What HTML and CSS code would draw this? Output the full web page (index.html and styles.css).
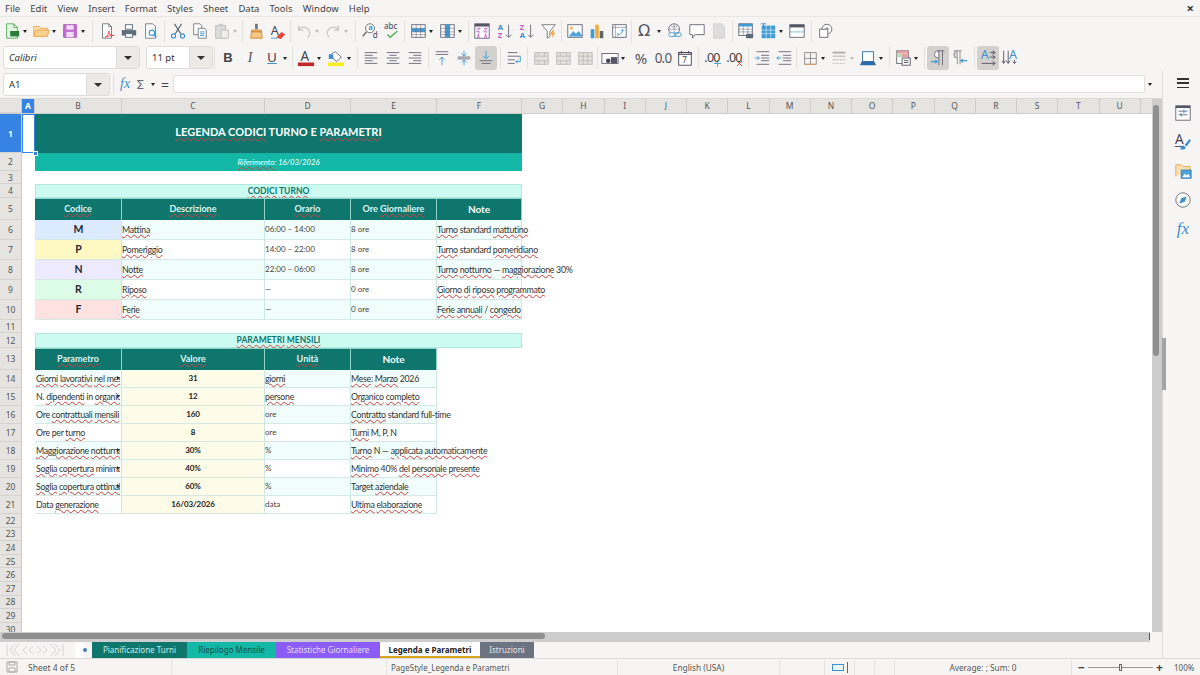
FILE: index.html
```html
<!DOCTYPE html>
<html lang="it">
<head>
<meta charset="utf-8">
<title>Legenda e Parametri</title>
<link rel="stylesheet" href="styles.css">
</head>
<body>
<div class="app">
  <nav class="menubar">
    <span>File</span><span>Edit</span><span>View</span><span>Insert</span><span>Format</span><span>Styles</span><span>Sheet</span><span>Data</span><span>Tools</span><span>Window</span><span>Help</span>
    <b class="close">×</b>
  </nav>

  <div class="tb tb1">
    <i class="ic"><svg viewBox="0 0 20 20"><path d="M4 2h8l4 4v12H4z" fill="#e4f3e2" stroke="#52ae57"/><path d="M12 2v4h4" fill="none" stroke="#52ae57"/><rect x="8" y="10" width="10" height="6" fill="#2f7d3a"/></svg></i><i class="ar"></i>
    <i class="ic"><svg viewBox="0 0 20 20"><path d="M2 16V5h6l2 2h7v2" fill="#fbe0b4" stroke="#eaa54b"/><path d="M2 16l2-7h15l-2 7z" fill="#fbd08a" stroke="#eaa54b"/></svg></i><i class="ar"></i>
    <i class="ic"><svg viewBox="0 0 20 20"><path d="M3 3h14v14H3z" fill="#c56fd1" stroke="#a94db8"/><rect x="6" y="3.500" width="8" height="5" fill="#f3dcf6"/><rect x="6" y="11" width="8" height="6" fill="#f3dcf6"/></svg></i><i class="ar"></i>
    <i class="sep z8"></i>
    <i class="ic"><svg viewBox="0 0 20 20"><path d="M5 2h7l3 3v13H5z" fill="#fff" stroke="#777"/><path d="M12 2v3h3" fill="none" stroke="#777"/><path d="M8 17c3-1 4-5 4-7 0 3 2 5 6 5-3 0-6 0-10 2z" fill="none" stroke="#e0433b"/></svg></i>
    <i class="ic"><svg viewBox="0 0 20 20"><rect x="6" y="3" width="8" height="5" fill="#fff" stroke="#5b6b78"/><path d="M2 9h16v6H2z" fill="#5b6b78"/><rect x="6" y="13" width="8" height="4" fill="#fff" stroke="#5b6b78"/></svg></i>
    <i class="ic"><svg viewBox="0 0 20 20"><path d="M4 2h8l3 3v13H4z" fill="#fff" stroke="#777"/><circle cx="11" cy="12" r="3" fill="none" stroke="#3d9bd6" stroke-width="1.300"/><path d="M13 14l3 3" stroke="#3d9bd6" stroke-width="1.500"/></svg></i>
    <i class="sep z5"></i>
    <i class="ic"><svg viewBox="0 0 20 20"><path d="M6 2l7 11M14 2L7 13" stroke="#4a5560" stroke-width="1.200"/><circle cx="5" cy="15.500" r="2.300" fill="none" stroke="#3d8fd0" stroke-width="1.200"/><circle cx="15" cy="15.500" r="2.300" fill="none" stroke="#3d8fd0" stroke-width="1.200"/></svg></i>
    <i class="ic"><svg viewBox="0 0 20 20"><path d="M3 2h7l2 2v10H3z" fill="#fff" stroke="#777"/><path d="M8 7h7l2 2v9H8z" fill="#fff" stroke="#777"/><path d="M10 11h5M10 13h5M10 15h5" stroke="#3d9bd6"/></svg></i>
    <i class="ic"><svg viewBox="0 0 20 20"><rect x="3" y="4" width="11" height="14" fill="#ddd" stroke="#bbb"/><rect x="6" y="2" width="5" height="3" fill="#ccc"/><rect x="9" y="9" width="8" height="9" fill="#eee" stroke="#bbb"/></svg></i><i class="ar off"></i>
    <i class="sep z5"></i>
    <i class="ic"><svg viewBox="0 0 20 20"><rect x="9" y="2" width="3" height="6" fill="#6b7680"/><path d="M5 9h11v2H5z" fill="#f3b665" stroke="#d08a30"/><path d="M5 11h11l1 7H4z" fill="#f7c884" stroke="#d08a30"/></svg></i>
    <i class="ic"><svg viewBox="0 0 20 20"><text x="2" y="14" class="ict">A</text><path d="M8 17l6-6 4 3-5 5z" fill="#e8443a"/><path d="M2 18h8" stroke="#3d9bd6"/></svg></i>
    <i class="sep z4"></i>
    <i class="ic"><svg viewBox="0 0 20 20"><path d="M4 4v5h5M4 9c2-4 9-5 12 1 1 2 0 5-2 7" fill="none" stroke="#c9c7c4" stroke-width="1.300"/></svg></i><i class="ar off"></i>
    <i class="ic"><svg viewBox="0 0 20 20"><path d="M16 4v5h-5M16 9c-2-4-9-5-12 1-1 2 0 5 2 7" fill="none" stroke="#c9c7c4" stroke-width="1.300"/></svg></i><i class="ar off"></i>
    <i class="sep z8"></i>
    <i class="ic"><svg viewBox="0 0 20 20"><circle cx="10" cy="7" r="5" fill="#fff" stroke="#666"/><path d="M6 11l-4 5" stroke="#666" stroke-width="1.600"/><text x="8" y="9" class="ict xs blue">a</text><text x="13" y="18" class="ict sm">d</text></svg></i>
    <i class="ic"><svg viewBox="0 0 20 20"><text x="1" y="8" class="ict sm">abc</text><path d="M5 14l3 3 8-7" fill="none" stroke="#4caf50" stroke-width="1.500"/></svg></i>
    <i class="sep z4"></i>
    <i class="ic"><svg viewBox="0 0 20 20"><rect x="3" y="3" width="15" height="14" fill="#fff" stroke="#667"/><rect x="3" y="7" width="15" height="4" fill="#3d9bd6"/><path d="M8 3v14M13 3v14M3 7h15M3 11h15M3 14h15" stroke="#667" stroke-width=".6"/></svg></i><i class="ar"></i>
    <i class="ic"><svg viewBox="0 0 20 20"><rect x="3" y="3" width="15" height="14" fill="#fff" stroke="#667"/><rect x="8" y="3" width="5" height="14" fill="#3d9bd6"/><path d="M8 3v14M13 3v14M3 7h15M3 11h15M3 14h15" stroke="#667" stroke-width=".6"/></svg></i><i class="ar"></i>
    <i class="sep z6"></i>
    <i class="ic"><svg viewBox="0 0 20 20"><rect x="2" y="2" width="16" height="16" fill="#fff" stroke="#667"/><rect x="2" y="2" width="16" height="3" fill="#556"/><path d="M4 7h4L4 11h4M12 7h4l-4 4h4M5 18l1-5 1 5M13 18l1-5 1 5" fill="none" stroke="#c45ccd"/></svg></i>
    <i class="ic shift"><svg viewBox="0 0 20 20"><text x="2" y="9" class="ict xs blue">A</text><text x="2" y="18" class="ict xs pink">Z</text><path d="M14 3v14M11 14l3 3 3-3" fill="none" stroke="#667"/></svg></i>
    <i class="ic shift"><svg viewBox="0 0 20 20"><text x="2" y="9" class="ict xs pink">Z</text><text x="2" y="18" class="ict xs blue">A</text><path d="M14 3v14M11 14l3 3 3-3" fill="none" stroke="#667"/></svg></i>
    <i class="ic shift"><svg viewBox="0 0 20 20"><path d="M2 3h15l-6 7v6l-3 2v-8z" fill="#fff" stroke="#777"/><path d="M14 9l-3 5h3l-1 4 4-6h-3l2-3z" fill="#f1a33b"/></svg></i>
    <i class="sep z5"></i>
    <i class="ic"><svg viewBox="0 0 20 20"><rect x="2" y="3" width="16" height="14" fill="#fff" stroke="#667"/><circle cx="6" cy="7" r="1.600" fill="#f2b34e"/><path d="M3 16l5-6 3 3 3-3 4 5v1z" fill="#4da3dc"/></svg></i>
    <i class="ic"><svg viewBox="0 0 20 20"><rect x="3" y="8" width="4" height="10" fill="#3d9bd6"/><rect x="8" y="3" width="4" height="15" fill="#f0ab3c"/><rect x="13" y="10" width="4" height="8" fill="#5c6670"/></svg></i>
    <i class="ic"><svg viewBox="0 0 20 20"><rect x="3" y="3" width="15" height="14" fill="#fff" stroke="#667"/><path d="M3 6h15M6 3v14" stroke="#667" stroke-width=".6"/><path d="M9 14c3 0 5-2 5-5M12 10l2-2 2 2M8 12l1 2-1 2" fill="none" stroke="#3d9bd6"/></svg></i>
    <i class="sep z3"></i>
    <i class="ic"><span class="omega">Ω</span></i><i class="ar wide"></i>
    <i class="ic"><svg viewBox="0 0 20 20"><circle cx="9" cy="8" r="6" fill="#fff" stroke="#667"/><path d="M3 8h12M9 2v12M5 4c3 2 5 2 8 0" fill="none" stroke="#667" stroke-width=".6"/><rect x="3" y="12" width="8" height="4" rx="2" fill="#fff" stroke="#3d9bd6"/><rect x="9" y="12" width="8" height="4" rx="2" fill="none" stroke="#3d9bd6"/></svg></i>
    <i class="ic"><svg viewBox="0 0 20 20"><path d="M2 3h16v11H8l-3 4v-4H2z" fill="#fff" stroke="#667"/></svg></i>
    <i class="ic"><svg viewBox="0 0 20 20"><path d="M4 2h9l3 3v13H4z" fill="#ddd" stroke="#d0d0d0"/></svg></i>
    <i class="sep z5"></i>
    <i class="ic"><svg viewBox="0 0 20 20"><rect x="2" y="2" width="15" height="13" fill="#fff" stroke="#667"/><rect x="2" y="2" width="15" height="3" fill="#3d9bd6"/><path d="M7 5v10M12 5v10M2 8h15M2 11h15" stroke="#667" stroke-width=".6"/><rect x="10" y="13" width="8" height="5" rx="1" fill="#5b6b78"/></svg></i>
    <i class="ic"><svg viewBox="0 0 20 20"><rect x="3" y="4" width="15" height="14" fill="#3d9bd6"/><path d="M8 4v14M13 4v14M3 9h15M3 13h15" stroke="#fff" stroke-width=".6"/><path d="M2 2h6M5 2v4" stroke="#3d8fd0"/></svg></i><i class="ar"></i>
    <i class="ic"><svg viewBox="0 0 20 20"><rect x="2" y="3" width="16" height="14" fill="#fff" stroke="#667"/><rect x="2" y="3" width="16" height="3" fill="#556"/><path d="M3 11h14" stroke="#3d9bd6" stroke-dasharray="2 1"/></svg></i>
    <i class="sep z8b"></i>
    <i class="ic"><svg viewBox="0 0 20 20"><circle cx="11" cy="8" r="5.500" fill="#fff" stroke="#667"/><rect x="3" y="8" width="9" height="9" fill="#fff" stroke="#667"/><path d="M9 8l2-2 2 2" fill="none" stroke="#667"/></svg></i>
  </div>

  <div class="tb tb2">
    <div class="combo cb-font"><span class="val it">Calibri</span><span class="dd"></span></div>
    <div class="combo cb-size"><span class="val">11 pt</span><span class="dd"></span></div>
    <i class="sep z4"></i>
    <i class="ic"><span class="g-b">B</span></i>
    <i class="ic"><span class="g-i">I</span></i>
    <i class="ic"><span class="g-u">U</span></i><i class="ar"></i>
    <i class="sep z5"></i>
    <i class="ic"><svg viewBox="0 0 20 20"><text x="4" y="13" class="ict big">A</text><rect x="1" y="15" width="18" height="4" fill="#c0282a"/></svg></i><i class="ar w8"></i>
    <i class="ic"><svg viewBox="0 0 20 20"><path d="M3 7l6-4 7 6-5 5z" fill="#fff" stroke="#667"/><rect x="2" y="6" width="5" height="5" fill="#3d8fd0"/><rect x="1" y="15" width="18" height="4" fill="#f5ec23"/></svg></i><i class="ar"></i>
    <i class="sep z6"></i>
    <i class="ic"><svg viewBox="0 0 20 20" class="ln"><path d="M3 4h14M3 7h9M3 10h14M3 13h9M3 16h14"/></svg></i>
    <i class="ic"><svg viewBox="0 0 20 20" class="ln"><path d="M3 4h14M6 7h8M3 10h14M6 13h8M3 16h14"/></svg></i>
    <i class="ic"><svg viewBox="0 0 20 20" class="ln"><path d="M3 4h14M8 7h9M3 10h14M8 13h9M3 16h14"/></svg></i>
    <i class="sep z5"></i>
    <i class="ic"><svg viewBox="0 0 20 20"><path d="M3 3h14M3 6h14" stroke="#667"/><path d="M10 18V9M7 12l3-3 3 3" fill="none" stroke="#3d9bd6"/></svg></i>
    <i class="ic"><svg viewBox="0 0 20 20"><path d="M3 9h14M3 11h14" stroke="#667"/><path d="M10 2v6M7 5l3 3 3-3M10 18v-6M7 15l3-3 3 3" fill="none" stroke="#3d9bd6"/></svg></i>
    <i class="ic on"><svg viewBox="0 0 20 20"><path d="M3 13h14M5 16h10" stroke="#667"/><path d="M10 2v9M7 8l3 3 3-3" fill="none" stroke="#3d9bd6"/></svg></i>
    <i class="sep z6"></i>
    <i class="ic"><svg viewBox="0 0 20 20"><path d="M3 4h11M3 8h14M3 12h8M3 16h8" stroke="#667"/><path d="M17 8v6h-5M14 12l-2 2 2 2" fill="none" stroke="#3d9bd6"/></svg></i>
    <i class="sep z5"></i>
    <i class="ic"><svg viewBox="0 0 20 20" class="grid-off"><rect x="3" y="4" width="15" height="13"/><path d="M3 8h15M3 13h15M7 4v4M14 4v4M7 13v4M14 13v4"/></svg></i>
    <i class="ic"><svg viewBox="0 0 20 20" class="grid-off"><rect x="3" y="4" width="15" height="13"/><path d="M3 8h15M3 13h15M7 4v4M14 4v4M7 13v4M14 13v4"/></svg></i>
    <i class="ic"><svg viewBox="0 0 20 20" class="grid-off"><rect x="3" y="4" width="15" height="13"/><path d="M3 8h15M3 13h15M8 4v13M13 4v13"/></svg></i>
    <i class="sep z3"></i>
    <i class="ic"><svg viewBox="0 0 20 20"><rect x="1" y="5" width="18" height="11" fill="#fff" stroke="#667"/><circle cx="8" cy="13" r="2.500" fill="#445"/><rect x="11" y="9" width="7" height="7" fill="#556"/></svg></i><i class="ar w9"></i>
    <i class="ic"><span class="g-pct">%</span></i>
    <i class="ic"><span class="g-num">0.0</span></i>
    <i class="ic"><svg viewBox="0 0 20 20"><rect x="3" y="4" width="14" height="14" fill="#fff" stroke="#445"/><path d="M3 4h14v2H3zM6 2v3M14 2v3" fill="none" stroke="#445"/><text x="7" y="16" class="ict sm">7</text></svg></i>
    <i class="sep z5"></i>
    <i class="ic"><span class="g-num sm">.00</span><svg class="badge" viewBox="0 0 8 8"><path d="M4 0v8M0 4h8" stroke="#3d9bd6"/></svg></i>
    <i class="ic"><span class="g-num sm">.00</span><svg class="badge" viewBox="0 0 8 8"><path d="M1 1l6 6M7 1l-6 6" stroke="#e0433b"/></svg></i>
    <i class="sep z6"></i>
    <i class="ic"><svg viewBox="0 0 20 20"><path d="M4 3h14M9 7h9M9 10h9M9 13h9M4 17h14" stroke="#667"/><path d="M2 10h5M5 8l2 2-2 2" fill="none" stroke="#3d9bd6"/></svg></i>
    <i class="ic"><svg viewBox="0 0 20 20"><path d="M4 3h14M9 7h9M9 10h9M9 13h9M4 17h14" stroke="#667"/><path d="M7 10H2M4 8l-2 2 2 2" fill="none" stroke="#3d9bd6"/></svg></i>
    <i class="sep z4"></i>
    <i class="ic"><svg viewBox="0 0 20 20"><path d="M4 4h13v13H4zM10.500 4v13M4 10.500h13" fill="none" stroke="#8a8a8a"/><path d="M4 17h13" stroke="#e59a50"/></svg></i><i class="ar"></i>
    <i class="ic"><svg viewBox="0 0 20 20"><path d="M3 4h14" stroke="#aaa" stroke-width="2"/><path d="M3 8h14" stroke="#aaa"/><path d="M3 12h14" stroke="#aaa" stroke-dasharray="3 1"/><path d="M3 16h14" stroke="#aaa" stroke-dasharray="1 1"/></svg></i><i class="ar off"></i>
    <i class="ic"><svg viewBox="0 0 20 20"><rect x="4" y="3" width="12" height="11" fill="#fff" stroke="#2a6ca8"/><path d="M1 18l2-4h14l2 4z" fill="#2a6ca8"/></svg></i><i class="ar"></i>
    <i class="sep z6"></i>
    <i class="ic"><svg viewBox="0 0 20 20"><rect x="3" y="2" width="13" height="14" fill="#fff" stroke="#667"/><rect x="3" y="2" width="13" height="3" fill="#e9a0a0"/><rect x="3" y="5" width="6" height="4" fill="#b4dcb4"/><rect x="9" y="5" width="7" height="4" fill="#e9a0a0"/><rect x="9" y="10" width="9" height="8" fill="#fff" stroke="#556"/><path d="M11 13h5M11 15h5" stroke="#556"/></svg></i><i class="ar"></i>
    <i class="sep z6"></i>
    <i class="ic on"><svg viewBox="0 0 20 20"><path d="M9 2h8M11 2v16M15 2v16" fill="none" stroke="#667"/><path d="M10 2a4 4 0 0 0 0 8" fill="#fff" stroke="#667"/><path d="M2 14h7M7 12l2 2-2 2" fill="none" stroke="#3d9bd6" stroke-width="1.300"/></svg></i>
    <i class="ic"><svg viewBox="0 0 20 20"><path d="M3 2h9M7 2v15M10 2v15" fill="none" stroke="#8a8a8a"/><path d="M7 2a4 4 0 0 0 0 8" fill="#ccc" stroke="#8a8a8a"/><path d="M18 13h-7M13 11l-2 2 2 2" fill="none" stroke="#3d9bd6" stroke-width="1.300"/></svg></i>
    <i class="sep z6"></i>
    <i class="ic on"><svg viewBox="0 0 20 20"><text x="2" y="11" class="ict blue">A</text><path d="M12 4h6M12 9h6M15 2l3 2-3 2M15 7l3 2-3 2M3 16h15M15 14l3 2-3 2" fill="none" stroke="#556"/></svg></i>
    <i class="ic"><svg viewBox="0 0 20 20"><text x="9" y="11" class="ict blue">A</text><path d="M3 2v14M8 2v14M1 13l2 3 2-3M6 13l2 3 2-3M15 12v4M13 14l2 2 2-2" fill="none" stroke="#556"/></svg></i>
  </div>

  <div class="work">
    <div class="main">
      <div class="fbar">
        <div class="combo cb-name"><span class="val">A1</span><span class="dd"></span></div>
        <i class="sep fsep"></i>
        <span class="fx">fx</span>
        <span class="sigma">Σ</span><i class="ar"></i>
        <span class="eq">=</span>
        <div class="finput"></div>
        <i class="ar fdrop"></i>
      </div>

      <div class="sheetwrap">
        <div class="sheet">
          <div class="row colhead">
            <div class="rh corner"></div>
            <div class="ch a act">A</div><div class="ch b">B</div><div class="ch c">C</div><div class="ch d">D</div><div class="ch e">E</div><div class="ch f">F</div>
            <div class="ch o">G</div><div class="ch o">H</div><div class="ch o">I</div><div class="ch o">J</div><div class="ch o">K</div><div class="ch o">L</div><div class="ch o">M</div><div class="ch o">N</div><div class="ch o">O</div><div class="ch o">P</div><div class="ch o">Q</div><div class="ch o">R</div><div class="ch o">S</div><div class="ch o">T</div><div class="ch o">U</div>
          </div>

          <div class="row h39">
            <div class="rh act">1</div>
            <div class="cell a sel"><span class="handle"></span></div>
            <div class="cell merge title"><span class="w">LEGENDA</span> <span class="w">CODICI</span> TURNO E <span class="w">PARAMETRI</span></div>
          </div>
          <div class="row h18">
            <div class="rh">2</div><div class="cell a"></div>
            <div class="cell merge subtitle"><span class="w">Riferimento</span>: 16/03/2026</div>
          </div>
          <div class="row h13"><div class="rh">3</div></div>
          <div class="row h14">
            <div class="rh">4</div><div class="cell a"></div>
            <div class="cell merge section"><span class="w">CODICI</span> <span class="w">TURNO</span></div>
          </div>
          <div class="row h22">
            <div class="rh">5</div><div class="cell a"></div>
            <div class="cell b hd"><span class="w">Codice</span></div><div class="cell c hd"><span class="w">Descrizione</span></div><div class="cell d hd"><span class="w">Orario</span></div><div class="cell e hd">Ore <span class="w">Giornaliere</span></div><div class="cell f hd big">Note</div>
          </div>

          <div class="row h20 alt">
            <div class="rh">6</div><div class="cell a nb"></div>
            <div class="cell b code m">M</div><div class="cell c txt"><span class="w">Mattina</span></div><div class="cell d sm">06:00 – 14:00</div><div class="cell e sm">8 ore</div><div class="cell f txt ov"><span class="w">Turno</span> standard <span class="w">mattutino</span></div>
          </div>
          <div class="row h20">
            <div class="rh">7</div><div class="cell a nb"></div>
            <div class="cell b code p">P</div><div class="cell c txt"><span class="w">Pomeriggio</span></div><div class="cell d sm">14:00 – 22:00</div><div class="cell e sm">8 ore</div><div class="cell f txt ov"><span class="w">Turno</span> standard <span class="w">pomeridiano</span></div>
          </div>
          <div class="row h20 alt">
            <div class="rh">8</div><div class="cell a nb"></div>
            <div class="cell b code n">N</div><div class="cell c txt"><span class="w">Notte</span></div><div class="cell d sm">22:00 – 06:00</div><div class="cell e sm">8 ore</div><div class="cell f txt ov"><span class="w">Turno</span> <span class="w">notturno</span> — <span class="w">maggiorazione</span> 30%</div>
          </div>
          <div class="row h20">
            <div class="rh">9</div><div class="cell a nb"></div>
            <div class="cell b code r">R</div><div class="cell c txt"><span class="w">Riposo</span></div><div class="cell d sm">—</div><div class="cell e sm">0 ore</div><div class="cell f txt ov"><span class="w">Giorno</span> <span class="w">di</span> <span class="w">riposo</span> <span class="w">programmato</span></div>
          </div>
          <div class="row h20 alt">
            <div class="rh">10</div><div class="cell a nb"></div>
            <div class="cell b code x">F</div><div class="cell c txt"><span class="w">Ferie</span></div><div class="cell d sm">—</div><div class="cell e sm">0 ore</div><div class="cell f txt ov"><span class="w">Ferie</span> <span class="w">annuali</span> / <span class="w">congedo</span></div>
          </div>

          <div class="row h13"><div class="rh">11</div></div>
          <div class="row h15">
            <div class="rh">12</div><div class="cell a"></div>
            <div class="cell merge section"><span class="w">PARAMETRI</span> <span class="w">MENSILI</span></div>
          </div>
          <div class="row h22">
            <div class="rh">13</div><div class="cell a"></div>
            <div class="cell b hd"><span class="w">Parametro</span></div><div class="cell c hd"><span class="w">Valore</span></div><div class="cell d hd"><span class="w">Unità</span></div><div class="cell e hd big">Note</div>
          </div>

          <div class="row h18 alt">
            <div class="rh">14</div><div class="cell a nb"></div>
            <div class="cell b txt clip"><span class="clipt"><span class="w">Giorni</span> <span class="w">lavorativi</span> <span class="w">nel</span> <span class="w">mese</span></span><i class="more"></i></div><div class="cell c val-c">31</div><div class="cell d txt"><span class="w">giorni</span></div><div class="cell e txt ov"><span class="w">Mese</span>: <span class="w">Marzo</span> 2026</div>
          </div>
          <div class="row h18">
            <div class="rh">15</div><div class="cell a nb"></div>
            <div class="cell b txt clip"><span class="clipt">N. <span class="w">dipendenti</span> in <span class="w">organico</span></span><i class="more"></i></div><div class="cell c val-c">12</div><div class="cell d txt"><span class="w">persone</span></div><div class="cell e txt ov"><span class="w">Organico</span> <span class="w">completo</span></div>
          </div>
          <div class="row h18 alt">
            <div class="rh">16</div><div class="cell a nb"></div>
            <div class="cell b txt clip"><span class="clipt">Ore <span class="w">contrattuali</span> <span class="w">mensili</span></span></div><div class="cell c val-c">160</div><div class="cell d sm">ore</div><div class="cell e txt ov"><span class="w">Contratto</span> standard full-time</div>
          </div>
          <div class="row h18">
            <div class="rh">17</div><div class="cell a nb"></div>
            <div class="cell b txt clip"><span class="clipt">Ore per <span class="w">turno</span></span></div><div class="cell c val-c">8</div><div class="cell d sm">ore</div><div class="cell e txt ov"><span class="w">Turni</span> M, P, N</div>
          </div>
          <div class="row h18 alt">
            <div class="rh">18</div><div class="cell a nb"></div>
            <div class="cell b txt clip"><span class="clipt"><span class="w">Maggiorazione</span> <span class="w">notturna</span></span><i class="more"></i></div><div class="cell c val-c">30%</div><div class="cell d sm">%</div><div class="cell e txt ov"><span class="w">Turno</span> N — <span class="w">applicata</span> <span class="w">automaticamente</span></div>
          </div>
          <div class="row h18">
            <div class="rh">19</div><div class="cell a nb"></div>
            <div class="cell b txt clip"><span class="clipt"><span class="w">Soglia</span> <span class="w">copertura</span> minima</span><i class="more"></i></div><div class="cell c val-c">40%</div><div class="cell d sm">%</div><div class="cell e txt ov"><span class="w">Minimo</span> 40% <span class="w">del</span> <span class="w">personale</span> <span class="w">presente</span></div>
          </div>
          <div class="row h18 alt">
            <div class="rh">20</div><div class="cell a nb"></div>
            <div class="cell b txt clip"><span class="clipt"><span class="w">Soglia</span> <span class="w">copertura</span> <span class="w">ottimale</span></span><i class="more"></i></div><div class="cell c val-c">60%</div><div class="cell d sm">%</div><div class="cell e txt ov">Target <span class="w">aziendale</span></div>
          </div>
          <div class="row h18">
            <div class="rh">21</div><div class="cell a nb"></div>
            <div class="cell b txt clip"><span class="clipt">Data <span class="w">generazione</span></span></div><div class="cell c val-c">16/03/2026</div><div class="cell d sm">data</div><div class="cell e txt ov"><span class="w">Ultima</span> <span class="w">elaborazione</span></div>
          </div>

          <div class="row hs"><div class="rh">22</div></div>
          <div class="row hs"><div class="rh">23</div></div>
          <div class="row hs"><div class="rh">24</div></div>
          <div class="row hs"><div class="rh">25</div></div>
          <div class="row hs"><div class="rh">26</div></div>
          <div class="row hs"><div class="rh">27</div></div>
          <div class="row hs"><div class="rh">28</div></div>
          <div class="row hs"><div class="rh">29</div></div>
          <div class="row hs"><div class="rh">30</div></div>
        </div>
        <div class="vscroll"><div class="vthumb"></div></div>
      </div>

      <div class="hscroll"><div class="hthumb"></div><i class="hmark"></i></div>

      <div class="tabs">
        <div class="tabnav"><svg viewBox="0 0 60 16"><path d="M2 2v12M10 2L5 8l5 6M14 2L9 8l5 6M22 4l-4 4 4 4M28 4l-4 4 4 4M32 4l4 4-4 4M38 4l4 4-4 4M46 2l5 6-5 6M50 2l5 6-5 6M58 2v12" fill="none" stroke="#d6d4d1"/></svg></div>
        <div class="tabadd"><span class="tabpage"></span><span class="dot"></span></div>
        <div class="tab t1">Pianificazione Turni</div>
        <div class="tab t2">Riepilogo Mensile</div>
        <div class="tab t3">Statistiche Giornaliere</div>
        <div class="tab t4">Legenda e Parametri</div>
        <div class="tab t5">Istruzioni</div>
      </div>
    </div>

    <aside class="side">
      <div class="burger"><i></i><i></i><i></i></div>
      <div class="handlebar"></div>
      <i class="sic"><svg viewBox="0 0 20 20"><rect x="2" y="2" width="16" height="16" fill="#fff" stroke="#667"/><rect x="2" y="2" width="16" height="2.500" fill="#556"/><path d="M5 8h10M5 12h10" stroke="#667"/><path d="M11 6v4M8 10v4" stroke="#3d9bd6" stroke-width="1.300"/></svg></i>
      <i class="sic"><svg viewBox="0 0 20 20"><text x="1" y="12" class="ict big">A</text><path d="M1 15h8" stroke="#445"/><path d="M7 18c0-3 2-4 4-4l2 2c0 2-3 3-6 2zM12 13l5-6 2 1-5 7z" fill="#3d8fd0"/></svg></i>
      <i class="sic"><svg viewBox="0 0 20 20"><path d="M2 16V3h6l2 2h8v4" fill="#fbe0b4" stroke="#eaa54b"/><rect x="8" y="9" width="11" height="9" fill="#4da3dc" stroke="#2f79b5"/><path d="M9 17l3-4 2 2 2-2 2 4z" fill="#fff"/></svg></i>
      <i class="sic"><svg viewBox="0 0 20 20"><circle cx="10" cy="10" r="8" fill="#fff" stroke="#667"/><path d="M14 6l-2 6-6 2 2-6z" fill="#3d8fd0"/></svg></i>
      <i class="sic"><span class="fx big">fx</span></i>
    </aside>
  </div>

  <footer class="status">
    <div class="st s1"><svg viewBox="0 0 12 12"><path d="M1 1h10v10H1z" fill="none" stroke="#aaa"/><path d="M3 1h6v3H3zM3 7h6v4H3z" fill="none" stroke="#aaa"/></svg><span>Sheet 4 of 5</span></div>
    <div class="st s2"></div>
    <div class="st s3">PageStyle_Legenda e Parametri</div>
    <div class="st s4">English (USA)</div>
    <div class="st s5"></div>
    <div class="st s6"><i class="selbox"></i><i class="cursor"></i></div>
    <div class="st s7"></div>
    <div class="st s8"></div>
    <div class="st s9">Average: ; Sum: 0</div>
    <div class="st s10"><b class="zm">−</b><span class="slider"><i></i></span><b class="zm">+</b></div>
    <div class="st s11">100%</div>
  </footer>
</div>
</body>
</html>
```

FILE: styles.css
```css
* { box-sizing: border-box; }
html, body { margin: 0; padding: 0; }
body { width: 1200px; height: 675px; overflow: hidden; background: #f6f5f3; font-family: "Noto Sans", sans-serif; color: #3b3b3b; }
i { font-style: normal; display: block; flex: none; }
.app { width: 1200px; height: 675px; display: flex; flex-direction: column; overflow: hidden; }

.menubar { height: 17px; flex: none; display: flex; align-items: center; gap: 10.100px; padding-left: 5px; font-size: 9.500px; color: #444; border-bottom: 1px solid #e9e7e4; position: relative; }
.close { position: absolute; right: 6px; top: 0; font-size: 13px; line-height: 16px; font-weight: 700; color: #333; }

.tb { display: flex; align-items: center; flex: none; }
.tb1 { height: 27px; padding-left: 1px; }
.tb2 { height: 27px; padding-left: 3px; }
.ic { width: 22px; height: 24px; display: flex; align-items: center; justify-content: center; position: relative; border-radius: 3px; }
.ic svg { width: 18px; height: 18px; overflow: visible; }
.ic svg.badge { position: absolute; width: 7px; height: 7px; right: 2px; bottom: 3px; }
.ic.on { background: #d3d1cd; }
.ic.shift { left: 1px; }
.ar { width: 7px; height: 8px; position: relative; }
.ar::after { content: ""; position: absolute; left: 0; top: 3px; border: 2.500px solid transparent; border-top: 3px solid #222; border-bottom: 0; }
.ar.off::after { border-top-color: #bbb; }
.ar.w8 { width: 8px; }
.ar.w9 { width: 9px; }
.ar.wide { width: 9px; }
.ar.wide::after { left: 2px; }
.sep { width: 1px; height: 22px; background: #e4e2df; }
.z3 { margin: 0 1px; }
.z4 { margin: 0 2px 0 1px; }
.z5 { margin: 0 2px; }
.z6 { margin: 0 2px 0 3px; }
.z8 { margin: 0 3px 0 4px; }
.z8b { margin: 0 3px 0 3px; }
.ict { font-family: "Noto Sans", sans-serif; font-size: 14px; fill: #445; }
.ict.big { font-size: 15px; }
.ict.sm { font-size: 9px; }
.ict.xs { font-size: 8.500px; font-weight: 700; }
.ict.blue { fill: #3d8fd0; }
.ict.pink { fill: #c45ccd; }
.ln path { stroke: #667; fill: none; }
.grid-off rect, .grid-off path { stroke: #bdbbb8; fill: none; }
.grid-off rect { fill: #e3e2df; }
.omega { font-family: "DejaVu Sans", sans-serif; font-size: 16px; color: #556; }
.g-b { font-family: "Liberation Sans", sans-serif; font-weight: 700; font-size: 13px; color: #444; }
.g-i { font-family: "Liberation Serif", serif; font-style: italic; font-size: 14px; color: #555; }
.g-u { font-family: "Liberation Sans", sans-serif; font-size: 13px; color: #445; text-decoration: underline; text-decoration-color: #3d8fd0; }
.g-pct { font-family: "Noto Sans", sans-serif; font-size: 15px; color: #556; }
.g-num { font-family: "Noto Sans", sans-serif; font-size: 13.500px; color: #556; letter-spacing: -.8px; }
.g-num.sm { font-size: 12.500px; }

.combo { display: flex; height: 23px; background: #fff; border: 1px solid #dedcd9; border-radius: 3px; font-size: 9.500px; color: #333; }
.combo .val { flex: 1; padding-left: 5px; line-height: 21px; }
.combo .it { font-style: italic; }
.dd { width: 23px; background: #eceae7; border-left: 1px solid #dedcd9; position: relative; }
.dd::after { content: ""; position: absolute; left: 7px; top: 9px; border: 4px solid transparent; border-top: 4px solid #333; border-bottom: 0; }
.cb-font { width: 137px; margin-right: 6px; }
.cb-size { width: 67px; }
.cb-name { width: 107px; }

.work { flex: 1; display: flex; min-height: 0; }
.main { width: 1162px; display: flex; flex-direction: column; }
.fbar { height: 28px; flex: none; display: flex; align-items: center; padding: 0 0 1px 3px; border-bottom: 1px solid #dcdad7; }
.fsep { margin: 0 6px 0 3px; }
.fx { font-family: "Liberation Serif", serif; font-style: italic; font-size: 14px; color: #3d8fd0; width: 16px; }
.fx.big { font-size: 17px; width: auto; margin: 0; }
.sigma { font-family: "DejaVu Sans", sans-serif; font-size: 13px; color: #667; width: 11px; }
.fbar .ar { margin-left: 4px; }
.eq { font-size: 14px; color: #444; margin-left: 3px; width: 12px; }
.finput { width: 972px; height: 18px; background: #fff; border: 1px solid #e2e0dd; border-radius: 2px; }
.fbar .fdrop { margin-left: 3px; width: 8px; }

.sheetwrap { flex: 1; display: flex; min-height: 0; background: #fff; }
.sheet { width: 1152px; overflow: hidden; font-family: Lato, sans-serif; color: #222; }
.row { display: flex; position: relative; }
.colhead { height: 15px; background: #e6e4e1; border-bottom: 1px solid #cfcdca; }
.ch { font-family: "Noto Sans", sans-serif; font-size: 8.500px; color: #555; text-align: center; line-height: 14px; border-right: 1px solid #cfcdca; flex: none; }
.corner { background: #f0eeec; }
.rh { width: 22px; flex: none; background: #e6e4e1; border-right: 1px solid #cfcdca; border-bottom: 1px solid #d5d3d0; font-family: "Noto Sans", sans-serif; font-size: 8.500px; color: #555; display: flex; align-items: center; justify-content: center; }
.rh.act, .ch.act { background: #3584e4; color: #fff; font-weight: 700; }
.h39 { height: 39px; } .h18 { height: 18px; } .h13 { height: 13px; } .h14 { height: 14px; } .h15 { height: 15px; } .h22 { height: 22px; } .h20 { height: 20px; } .hs { height: 13.600px; }
.h39 .cell { line-height: 36px; } .h18 .cell { line-height: 17px; } .h14 .cell { line-height: 12px; } .h15 .cell { line-height: 13px; } .h22 .cell { line-height: 20px; } .h20 .cell { line-height: 19px; }
.a { width: 13px; } .b { width: 87px; } .c { width: 143px; } .d { width: 86px; } .e { width: 86px; } .f { width: 85px; } .o { width: 41.250px; }
.cell { flex: none; display: block; white-space: nowrap; font-size: 9px; position: relative; }
.nb { background: #fff; }
.sel { outline: 1.500px solid #3584e4; outline-offset: -1px; z-index: 2; }
.handle { position: absolute; right: -3px; bottom: -3px; width: 5px; height: 5px; background: #3584e4; border: 1px solid #fff; }
.w { text-decoration: underline wavy #d0403c 1px; text-underline-offset: 1px; }
.merge { width: 487px; text-align: center; }
.title { background: #0f766e; color: #fff; font-weight: 700; }
.h39 .title { font-size: 11px; }
.h18 .subtitle { background: #14b8a6; color: #fff; font-style: italic; font-size: 7.700px; border-top: 1px solid #2aa; }
.section { background: #ccfbf1; color: #0f766e; font-weight: 700; font-size: 8.500px; border: 1px solid #b5e8dc; }
.hd { background: #0f766e; color: #dff5f1; font-weight: 700; font-size: 9px; text-align: center; border-right: 1px solid #8fd3c9; border-top: 1px solid #8fd3c9; }
.hd.big { font-size: 10px; color: #fff; }
.alt .cell:not(.nb):not(.code):not(.val-c) { background: #f0fdfa; }
.row .cell.b:not(.hd), .row .cell.c:not(.hd), .row .cell.d:not(.hd), .row .cell.e:not(.hd), .row .cell.f:not(.hd) { border-right: 1px solid #cfe7e2; border-bottom: 1px solid #d4e8e4; }
.row .cell.b:not(.hd) { padding-left: 1px; }
.txt { font-size: 8.800px; color: #333; letter-spacing: -.3px; }
.sm { font-size: 8px; color: #444; }
.ov { z-index: 1; }
.row .cell.code { font-size: 10.500px; font-weight: 700; text-align: center; color: #1f2937; padding-left: 0; }
.code.m { background: #dbeafe; } .code.p { background: #fef9c3; } .code.n { background: #ede9fe; } .code.r { background: #dcfce7; } .code.x { background: #fee2e2; }
.row .cell.val-c { background: #fefce8; text-align: center; font-weight: 700; font-size: 8px; letter-spacing: -.1px; }
.clip { overflow: hidden; }
.clipt { display: block; width: 84px; overflow: hidden; }
.more { position: absolute; right: 1px; top: 6px; width: 0; height: 0; border-left: 3px solid #333; border-top: 2.500px solid transparent; border-bottom: 2.500px solid transparent; }

.vscroll { width: 10px; background: #cdcdcd; flex: none; position: relative; }
.vthumb { position: absolute; left: 1px; top: 6px; width: 6px; height: 251px; border-radius: 3px; background: #8f8f8f; }
.hscroll { height: 10px; flex: none; width: 1150px; background: #cdcdcd; position: relative; }
.hthumb { position: absolute; left: 2px; top: 1px; height: 6px; width: 543px; border-radius: 3px; background: #8f8f8f; }
.hmark { position: absolute; right: 0; top: 1px; width: 1px; height: 7px; background: #555; }

.tabs { height: 16px; flex: none; display: flex; align-items: flex-start; padding-left: 5px; font-size: 8px; }
.tabnav { width: 60px; height: 16px; }
.tabnav svg { width: 60px; height: 16px; display: block; }
.tabadd { width: 27px; height: 16px; display: flex; align-items: center; padding-left: 10px; }
.tabpage { width: 9px; height: 15px; background: #fff; }
.dot { width: 4px; height: 4px; border-radius: 50%; background: #3d7fc5; margin-left: -1px; }
.tab { height: 16px; line-height: 15px; text-align: center; flex: none; }
.t1 { width: 95px; background: #0f766e; color: #c9ece6; }
.t2 { width: 89px; background: #14b8a6; color: #134e4a; }
.t3 { width: 104px; background: #8b5cf6; color: #e9defd; }
.t4 { width: 100px; background: #fff; color: #222; font-weight: 700; border-bottom: 2px solid #d9a520; }
.t5 { width: 54px; background: #6b7280; color: #e5e7eb; }

.side { flex: 1; border-left: 1px solid #dedcd9; display: flex; flex-direction: column; align-items: center; position: relative; padding: 6px 0 0 3px; }
.burger { width: 14px; height: 12px; display: flex; flex-direction: column; justify-content: space-between; padding: 1px 1px; margin-bottom: 14px; }
.burger i { height: 1.500px; background: #333; }
.sic { width: 20px; height: 20px; margin-bottom: 9px; display: flex; align-items: center; justify-content: center; }
.sic svg { width: 18px; height: 18px; overflow: visible; }
.handlebar { position: absolute; left: -1px; top: 267px; width: 4px; height: 52px; background: #a3a3a3; }

.status { height: 17px; flex: none; display: flex; align-items: center; font-size: 8.300px; color: #555; border-top: 1px solid #dcdad7; }
.st { height: 15px; display: flex; align-items: center; flex: none; border-right: 1px solid #e6e4e1; white-space: nowrap; }
.s1 { width: 172px; padding-left: 6px; gap: 10px; font-size: 8.500px; }
.s1 svg { width: 12px; height: 12px; }
.s2 { width: 215px; }
.s3 { width: 231px; padding-left: 4px; font-size: 8px; }
.s4 { width: 162px; justify-content: center; }
.s5 { width: 45px; }
.s6 { width: 30px; gap: 3px; padding-left: 7px; }
.selbox { width: 12px; height: 7px; border: 1px solid #3d8fd0; background: #eaf4fb; }
.cursor { width: 1px; height: 11px; background: #666; }
.s7 { width: 20px; }
.s8 { width: 20px; }
.s9 { width: 177px; justify-content: center; }
.s10 { width: 94px; padding-left: 6px; gap: 3px; border: 0; }
.zm { font-size: 12px; line-height: 11px; font-weight: 700; color: #444; }
.slider { width: 65px; height: 1px; background: #999; position: relative; }
.slider i { position: absolute; left: 31px; top: -3px; width: 3px; height: 7px; background: #eee; border: 1px solid #666; }
.s11 { padding-left: 8px; border: 0; font-size: 8px; }
```
